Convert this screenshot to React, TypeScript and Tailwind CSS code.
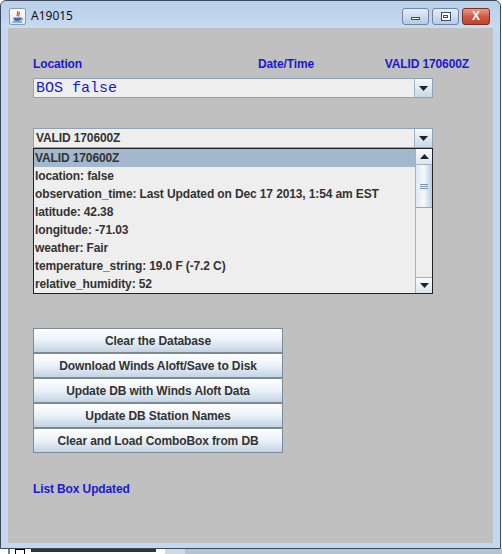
import React from "react";

const blue = "text-[#1a1ad0]";

function Arrow({ up = false }: { up?: boolean }) {
  return (
    <svg width="9" height="5" viewBox="0 0 9 5">
      {up ? <polygon points="0,5 9,5 4.5,0" fill="#222" /> : <polygon points="0,0 9,0 4.5,5" fill="#222" />}
    </svg>
  );
}

function Combo({ children }: { children: React.ReactNode }) {
  return (
    <div className="flex h-[20px] w-[400px] border border-[#8fa3b8] bg-[#eeeeee]">
      <div className="flex flex-1 items-center pl-[2px] overflow-hidden">{children}</div>
      <div className="flex w-[18px] items-center justify-center border-l border-[#9fb2c6] bg-gradient-to-b from-[#f4f8fc] to-[#c9d8e8]">
        <Arrow />
      </div>
    </div>
  );
}

const rows = [
  "VALID 170600Z",
  "location: false",
  "observation_time: Last Updated on Dec 17 2013, 1:54 am EST",
  "latitude: 42.38",
  "longitude: -71.03",
  "weather: Fair",
  "temperature_string: 19.0 F (-7.2 C)",
  "relative_humidity: 52",
];

const buttons = [
  "Clear the Database",
  "Download Winds Aloft/Save to Disk",
  "Update DB with Winds Aloft Data",
  "Update DB Station Names",
  "Clear and Load ComboBox from DB",
];

export default function App() {
  return (
    <div
      className="relative w-[502px] h-[554px] overflow-hidden bg-white tracking-[-0.12px]"
      style={{ fontFamily: '"Liberation Sans", Arial, sans-serif' }}
    >
      <div className="flex h-[549px] w-[501px] flex-col rounded-t-[6px] border border-[#3a4a5a] bg-[#c3d8ef]">
        {/* title bar */}
        <div className="flex h-[27px] items-center bg-gradient-to-b from-[#b8d0ea] to-[#c6daf0] pl-[8px] pr-[10px] pt-[3px] rounded-t-[6px]">
          <div className="flex h-[17px] w-[17px] items-center justify-center rounded-[2px] border border-[#8a9bb0] bg-gradient-to-b from-white to-[#dfe6ee]">
            <svg width="13" height="13" viewBox="0 0 13 13">
              <path d="M6.5 1 C8 3 5 4 6.5 6 M8 2 C9 4 7 5 8 6.5" stroke="#e0401c" strokeWidth="1.2" fill="none" />
              <path d="M2.5 7.5 H10 V9 C10 10.5 8.5 11 6.2 11 C4 11 2.5 10.5 2.5 9 Z" fill="#3d6fb0" />
              <path d="M10 8 C12 8 12 10 10 10" stroke="#3d6fb0" strokeWidth="1" fill="none" />
              <path d="M1.5 12 H11" stroke="#3d6fb0" strokeWidth="1" />
            </svg>
          </div>
          <span className="ml-[5px] text-[12px] tracking-normal text-[#111]" style={{ fontFamily: '"Noto Sans", "Open Sans", sans-serif' }}>
            A19015
          </span>
          <div className="ml-auto flex gap-[3px]">
            <div className="flex h-[17px] w-[27px] items-center justify-center rounded-[3px] border border-[#6f84a0] bg-gradient-to-b from-[#e4eef9] to-[#b7cbe2]">
              <div className="mt-[5px] h-[3px] w-[9px] border border-[#3b4f68] bg-white" />
            </div>
            <div className="flex h-[17px] w-[27px] items-center justify-center rounded-[3px] border border-[#6f84a0] bg-gradient-to-b from-[#e4eef9] to-[#b7cbe2]">
              <div className="flex h-[9px] w-[10px] items-center justify-center border border-[#3b4f68] bg-white">
                <div className="h-[3px] w-[5px] border border-[#3b4f68]" />
              </div>
            </div>
            <div className="flex h-[17px] w-[28px] items-center justify-center rounded-[3px] border border-[#7a2f25] bg-gradient-to-b from-[#eb9a88] via-[#d25a42] to-[#c0432c]">
              <span className="text-[12px] font-bold leading-none text-white">X</span>
            </div>
          </div>
        </div>

        {/* content */}
        <div className="mx-[7px] flex flex-1 flex-col bg-[#c0c0c0] pl-[25px] pr-[24px] pt-[29px] mb-[3px]">
          <div className={`flex h-[14px] items-center text-[12px] font-bold leading-[14px] ${blue}`}>
            <span className="w-[225px]">Location</span>
            <span>Date/Time</span>
            <span className="ml-auto">VALID 170600Z</span>
          </div>

          <div className="mt-[7px]">
            <Combo>
              <span
                className="text-[15px] leading-none tracking-normal text-[#1a1ad0]"
                style={{ fontFamily: '"Liberation Mono", "Courier New", monospace' }}
              >
                BOS false
              </span>
            </Combo>
          </div>

          <div className="mt-[30px]">
            <Combo>
              <span className="text-[12px] font-bold text-[#333]">VALID 170600Z</span>
            </Combo>
          </div>

          {/* list */}
          <div className="flex h-[146px] w-[400px] border border-[#222] bg-[#eeeeee]">
            <div className="flex flex-1 flex-col overflow-hidden">
              {rows.map((r, i) => (
                <div
                  key={r}
                  className={`flex h-[18px] shrink-0 items-center whitespace-nowrap pl-[1px] text-[12px] font-bold text-[#333] ${
                    i === 0 ? "bg-[#a3b8cc]" : ""
                  }`}
                >
                  {r}
                </div>
              ))}
            </div>
            <div className="flex w-[17px] flex-col border-l border-[#9fb2c6] bg-[#eeeeee]">
              <div className="flex h-[16px] items-center justify-center border-b border-[#9fb2c6] bg-gradient-to-b from-[#f7f9fc] to-[#dbe5ef]">
                <Arrow up />
              </div>
              <div className="flex h-[43px] items-center justify-center border-b border-[#8fa6bf] bg-gradient-to-r from-[#dfe9f5] via-[#f5f8fc] to-[#b9cde3]">
                <div className="flex flex-col gap-[1px]">
                  <div className="h-[1px] w-[8px] bg-[#7d93ad]" />
                  <div className="h-[1px] w-[8px] bg-[#7d93ad]" />
                  <div className="h-[1px] w-[8px] bg-[#7d93ad]" />
                </div>
              </div>
              <div className="flex-1" />
              <div className="flex h-[16px] items-center justify-center border-t border-[#9fb2c6] bg-gradient-to-b from-[#f7f9fc] to-[#dbe5ef]">
                <Arrow />
              </div>
            </div>
          </div>

          {/* buttons */}
          <div className="mt-[34px] flex w-[250px] flex-col">
            {buttons.map((b) => (
              <div
                key={b}
                className="flex h-[25px] items-center justify-center border border-[#7a8a99] bg-gradient-to-b from-[#ffffff] via-[#eaf1f8] to-[#c3d3e4] text-[12px] font-bold text-[#333]"
              >
                {b}
              </div>
            ))}
          </div>

          <div className={`mt-[29px] text-[12px] font-bold leading-[14px] ${blue}`}>List Box Updated</div>
        </div>
        <div className="h-[2px]" />
      </div>

      {/* desktop behind */}
      <div className="absolute left-0 top-[549px] flex h-[5px] w-[502px] items-start bg-white">
        <div className="ml-[8px] h-[5px] w-[2px] bg-[#7a7a7a]" />
        <div className="ml-[5px] h-[5px] w-[10px] border border-black border-b-0" />
        <div className="ml-[6px] h-[5px] w-[130px] overflow-hidden">
          <div className="h-[3px] w-[125px] bg-[#333]" />
        </div>
        <div className="ml-[4px] h-[5px] w-[20px] bg-[#d0d8e0]" />
        <div className="h-[5px] flex-1 bg-[#b7c2cc]" />
      </div>
    </div>
  );
}
